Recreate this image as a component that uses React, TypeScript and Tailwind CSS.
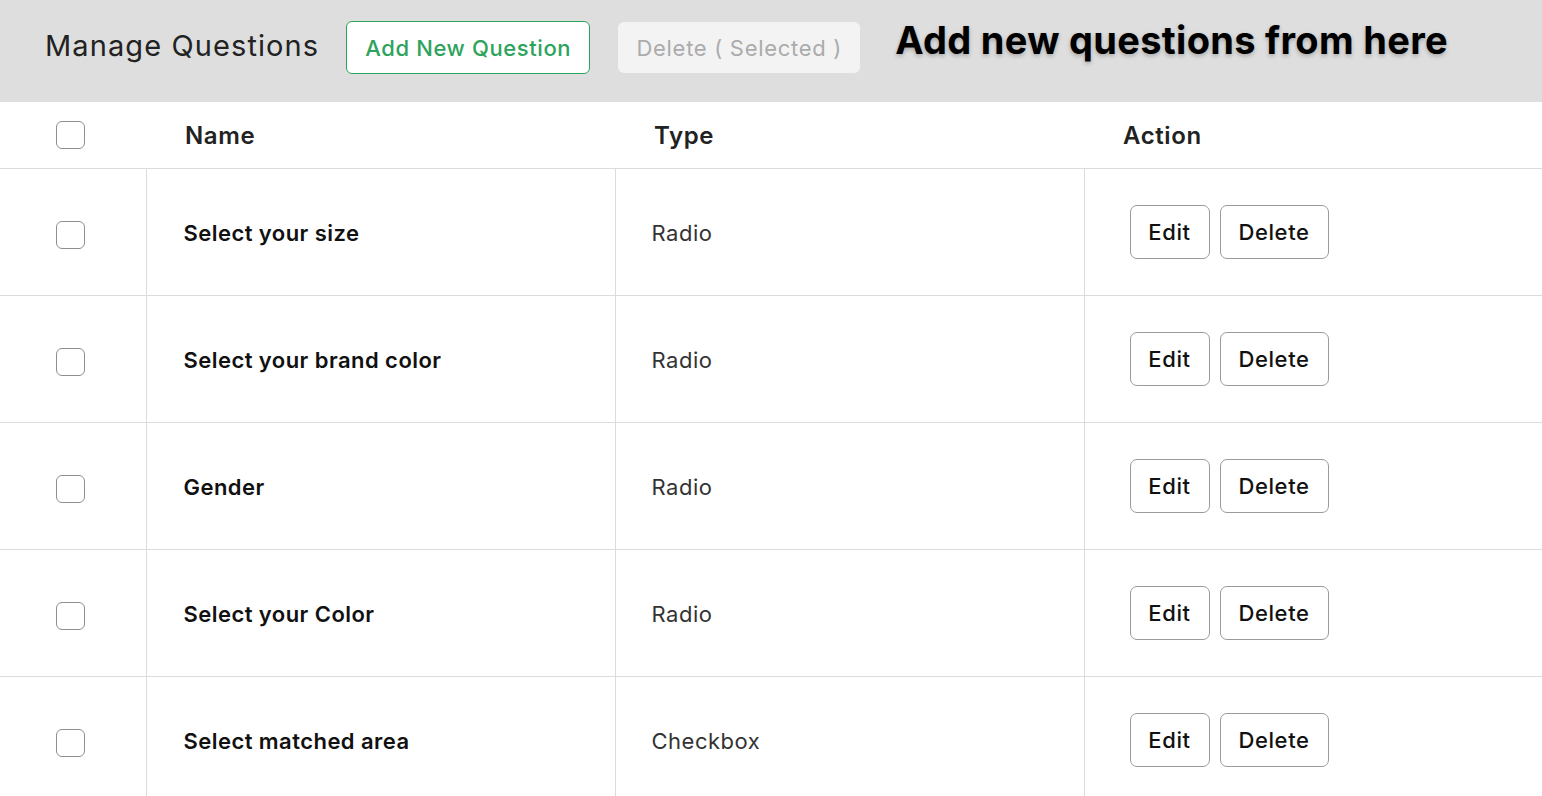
import React from 'react';

type Question = { id: number; name: string; type: string };

const questions: Question[] = [
  { id: 1, name: 'Select your size', type: 'Radio' },
  { id: 2, name: 'Select your brand color', type: 'Radio' },
  { id: 3, name: 'Gender', type: 'Radio' },
  { id: 4, name: 'Select your Color', type: 'Radio' },
  { id: 5, name: 'Select matched area', type: 'Checkbox' },
];

function Box() {
  return <div className="w-[29px] h-[28px] rounded-[6px] border border-[#8f8f8f] bg-white" />;
}

export default function App() {
  return (
    <div className="w-[1542px] h-[796px] overflow-hidden bg-white font-['Inter',sans-serif]">
      {/* Toolbar */}
      <div className="h-[102px] bg-[#dedede] flex items-center pl-[45px] pb-[8px]">
        <h1 className="text-[29px] text-[#222] tracking-[1.1px] mr-[27px] -mt-[2px]">Manage Questions</h1>
        <button className="h-[53px] w-[244px] rounded-[6px] border border-[#2ea35b] bg-white text-[22px] font-medium text-[#2ea35b] tracking-[0.6px] mr-[28px] pt-[3px]">
          Add New Question
        </button>
        <button className="h-[51px] w-[242px] rounded-[6px] bg-[#f3f3f3] text-[22px] text-[#ababab] tracking-[0.7px] pt-[3px]">
          Delete ( Selected )
        </button>
        <span className="ml-[35px] text-[38px] font-bold text-black tracking-[0.3px] [text-shadow:0_2px_4px_rgba(0,0,0,0.25)] -mt-[14px]">
          Add new questions from here
        </span>
      </div>

      {/* Table */}
      <table className="w-full border-collapse table-fixed">
        <colgroup>
          <col className="w-[146px]" />
          <col className="w-[469px]" />
          <col className="w-[469px]" />
          <col />
        </colgroup>
        <thead>
          <tr className="h-[66px] border-b border-[#dcdcdc]">
            <th className="pl-[56px] text-left align-middle">
              <Box />
            </th>
            <th className="pl-[39px] pt-[2px] text-left text-[24px] font-semibold tracking-[0.6px] text-[#222]">Name</th>
            <th className="pl-[39px] pt-[2px] text-left text-[24px] font-semibold tracking-[0.6px] text-[#222]">Type</th>
            <th className="pl-[39px] pt-[2px] text-left text-[24px] font-semibold tracking-[0.6px] text-[#222]">Action</th>
          </tr>
        </thead>
        <tbody>
          {questions.map((q) => (
            <tr key={q.id} className="h-[127px] border-b border-[#dcdcdc]">
              <td className="pl-[56px] border-r border-[#dcdcdc] align-middle">
                <div className="pt-[6px]">
                  <Box />
                </div>
              </td>
              <td className="pl-[37px] pt-[3px] border-r border-[#dcdcdc] text-[22px] font-semibold tracking-[0.45px] text-[#111]">{q.name}</td>
              <td className="pl-[36px] pt-[3px] border-r border-[#dcdcdc] text-[22px] tracking-[0.5px] text-[#333]">{q.type}</td>
              <td className="pl-[45px]">
                <div className="flex gap-[10px]">
                  <button className="h-[54px] w-[80px] rounded-[7px] border border-[#9a9a9a] bg-white text-[22px] font-medium tracking-[0.6px] text-[#111] pt-[2px]">
                    Edit
                  </button>
                  <button className="h-[54px] w-[109px] rounded-[7px] border border-[#9a9a9a] bg-white text-[22px] font-medium tracking-[0.6px] text-[#111] pt-[2px]">
                    Delete
                  </button>
                </div>
              </td>
            </tr>
          ))}
        </tbody>
      </table>
    </div>
  );
}
